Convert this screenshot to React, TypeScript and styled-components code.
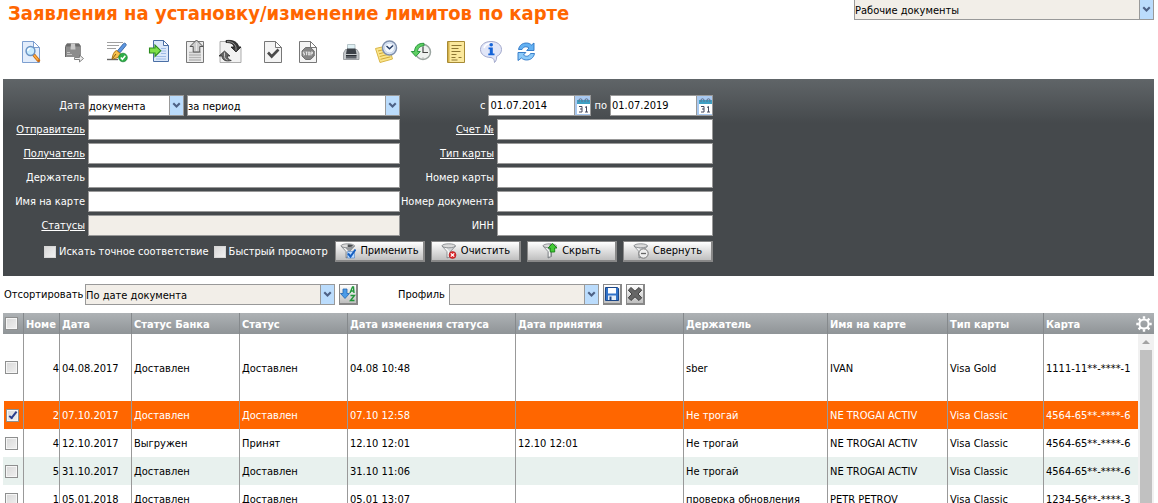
import React from "react";
import styled, { createGlobalStyle, css } from "styled-components";

const GlobalStyle = createGlobalStyle`
  *, *::before, *::after { box-sizing: border-box; }
  html, body { margin: 0; height: 100%; overflow: hidden; background: #fff; }
  body, input, select, button {
    font-family: Tahoma, "DejaVu Sans Condensed", "DejaVu Sans", sans-serif;
    font-size: 11px;
    line-height: 14px;
    color: #000;
  }
`;

const Page = styled.div`
  display: flex;
  flex-direction: column;
  height: 100vh;
  padding: 0 4px 0 3px;
  overflow: hidden;
`;

const TopBar = styled.header`
  display: flex;
  justify-content: space-between;
  align-items: flex-start;
  padding-left: 5px;
`;

const Title = styled.h1`
  margin: 0;
  font-size: 20px;
  line-height: 26px;
  font-weight: bold;
  color: #ff6600;
  white-space: nowrap;
`;

const SelectFrame = styled.span<{ $width?: number; $tone?: "plain" | "muted"; $flushTop?: boolean }>`
  display: flex;
  flex: ${(p) => (p.$width ? `0 0 ${p.$width}px` : "1")};
  height: ${(p) => (p.$flushTop ? 20 : 21)}px;
  border: 1px solid #999;
  ${(p) => p.$flushTop && "border-top: 0;"}
  background: ${(p) => (p.$tone === "muted" ? "#f2eee8" : "#fff")};
`;

const NativeSelect = styled.select`
  appearance: none;
  flex: 1;
  min-width: 0;
  padding: 2px 0 0;
  border: 0;
  border-radius: 0;
  background: transparent;
  outline: none;
`;

const SelectArrow = styled.span`
  display: flex;
  align-items: center;
  justify-content: center;
  width: 14px;
  border-left: 1px solid #999;
  background: #bbdcfc;
  pointer-events: none;
`;

const Toolbar = styled.nav`
  display: flex;
  gap: 19px;
  padding: 13px 0 16px 16px;
`;

const ToolGroup = styled.div`
  display: flex;
  gap: 11px;
`;

const ToolButton = styled.button`
  width: 24px;
  height: 24px;
  padding: 0;
  border: 0;
  background: none;
  svg { display: block; }
`;

const FilterPanel = styled.form`
  padding: 16px 0 14px;
  background: linear-gradient(#606568 0, #45494c 44px);
  color: #fff;
`;

const FilterGrid = styled.div`
  display: grid;
  grid-template-columns: 82px 312px 91px 216px;
  column-gap: 3px;
  row-gap: 3px;
`;

const FieldLabel = styled.label`
  align-self: center;
  justify-self: end;
  color: #fff;
  white-space: nowrap;
  a { color: inherit; }
`;

const TextInput = styled.input<{ $muted?: boolean }>`
  width: 100%;
  height: 21px;
  padding: 0 1px;
  border: 1px solid #999;
  border-radius: 0;
  background: ${(p) => (p.$muted ? "#f2eee8" : "#fff")};
  outline: none;
`;

const Pair = styled.div`
  display: flex;
  gap: 3px;
`;

const DateRange = styled.div`
  grid-column: 3 / 5;
  display: flex;
  justify-content: flex-end;
  align-items: center;
  gap: 3px;
`;

const DateFrame = styled.span`
  display: flex;
  width: 103px;
  height: 21px;
  border: 1px solid #999;
  background: #fff;
  input { flex: 1; min-width: 0; border: 0; padding: 1px 0 0 1px; background: none; outline: none; }
  button { width: 16px; padding: 0; border: 0; border-left: 1px solid #999; background: #a9c9f0; }
  svg { display: block; }
`;

const FilterActions = styled.div`
  display: flex;
  align-items: center;
  gap: 5px;
  width: 710px;
  margin-top: 5px;
  padding-left: 41px;
`;

const ButtonRow = styled.div`
  display: flex;
  gap: 6px;
  margin-left: auto;
`;

const CheckLabel = styled.label`
  display: flex;
  align-items: center;
  gap: 3px;
  white-space: nowrap;
`;

const Checkbox = styled.input<{ $boxed?: boolean }>`
  appearance: none;
  flex: none;
  display: grid;
  width: 12px;
  height: 12px;
  margin: 0;
  border: 1px solid #d6d6d6;
  background: linear-gradient(135deg, #d8d8d8, #f0f0f0);
  ${(p) =>
    p.$boxed &&
    css`
      width: 13px;
      height: 13px;
      border-color: #8e8f8f;
      box-shadow: inset 0 0 0 1px #f6f6f6;
    `}
  &:checked::after {
    content: "";
    width: 4px;
    height: 9px;
    margin: 0 0 0 4px;
    border: solid #2b3e8c;
    border-width: 0 2px 2px 0;
    transform: rotate(38deg);
  }
`;

const bevel = css`
  height: 21px;
  padding: 0;
  border: 1px solid #888;
  border-right-width: 2px;
  border-bottom-width: 2px;
  border-radius: 0;
  background: linear-gradient(#fff, #bfbfbf);
`;

const ActionButton = styled.button`
  ${bevel}
  display: flex;
  align-items: center;
  justify-content: center;
  gap: 4px;
  width: 90px;
`;

const SquareButton = styled.button`
  ${bevel}
  display: grid;
  place-items: center;
  width: 19px;
  margin-left: 4px;
`;

const SortBar = styled.div`
  display: flex;
  align-items: center;
  padding: 8px 0 8px 1px;
`;

const SortLabel = styled.label`
  width: 81px;
`;

const ProfileLabel = styled.label`
  width: 51px;
  margin-left: 40px;
`;

const GridFrame = styled.section`
  display: flex;
  flex: 1;
  min-height: 0;
  overflow: hidden;
`;

const headerFill = css`
  background: linear-gradient(#aeb2b5, #8f9497);
`;

const Table = styled.table`
  flex: 1;
  width: 0;
  align-self: flex-start;
  table-layout: fixed;
  border-collapse: separate;
  border-spacing: 0;
`;

const Th = styled.th`
  height: 21px;
  padding: 2px 1px 0 2px;
  border-right: 1px solid #85898c;
  ${headerFill}
  color: #fff;
  font-weight: bold;
  text-align: left;
  white-space: nowrap;
  overflow: hidden;
  &:first-child { padding-top: 0; }
  &:last-child { border-right: 0; }
`;

const Tr = styled.tr<{ $tall?: boolean; $selected?: boolean; $striped?: boolean }>`
  height: ${(p) => (p.$tall ? 67 : 28)}px;
  color: ${(p) => (p.$selected ? "#fff" : "#000")};
  background: ${(p) => (p.$selected ? "#ff6600" : p.$striped ? "#e8f1ee" : "#fff")};
  td:first-child { border-left: ${(p) => (p.$selected ? 1 : 0)}px solid #fff; }
`;

const Td = styled.td<{ $numeric?: boolean }>`
  padding: ${(p) => (p.$numeric ? "2px 0 0" : "2px 0 0 2px")};
  border-right: 1px solid #999;
  text-align: ${(p) => (p.$numeric ? "right" : "left")};
  white-space: nowrap;
  overflow: hidden;
  &:first-child { padding-top: 0; }
  &:last-child { border-right: 0; }
`;

const SideRail = styled.div`
  display: flex;
  flex-direction: column;
  width: 16px;
`;

const RailHead = styled.div`
  height: 21px;
  ${headerFill}
`;

const GearButton = styled.button`
  display: grid;
  place-items: center;
  width: 16px;
  height: 21px;
  margin-left: -2px;
  padding: 0;
  border: 0;
  background: none;
`;

const ScrollTrack = styled.div`
  flex: 1;
  display: flex;
  flex-direction: column;
  align-items: center;
  background: #f1f1f1;
`;

const ScrollUp = styled.span`
  display: grid;
  place-items: center;
  height: 16px;
`;

const ScrollThumb = styled.span`
  flex: 1;
  width: 12px;
  background: #c1c1c1;
`;

const Chevron = () => (
  <svg width="9" height="7" viewBox="0 0 9 7" aria-hidden="true">
    <path d="M0.500 2 2 .5l2.500 2.500L7 .5l1.500 1.500-4 4z" fill="#4d6185" />
  </svg>
);

const PageShape = ({ stroke = "#777", fill = "#f4f4f4" }: { stroke?: string; fill?: string }) => (
  <>
    <path d="M3.500 2.500h11l6 6v15h-17z" fill={fill} stroke={stroke} />
    <path d="M14.500 2.500v6h6z" fill="#fff" stroke={stroke} />
  </>
);

const toolIcons: Record<string, React.ReactNode> = {
  view: (
    <>
      <PageShape stroke="#7d9fd0" fill="#e3edfb" />
      <path d="m14.500 15.500 5 6" stroke="#c96a12" strokeWidth="3.400" strokeLinecap="round" />
      <path d="m15 16 4 5" stroke="#ffae42" strokeWidth="1.600" />
      <circle cx="11.500" cy="12" r="4.400" fill="#c9ecff" stroke="#6b93c4" strokeWidth="1.500" />
      <path d="M8.800 12a2.800 2.800 0 0 1 2.600-2.600" stroke="#fff" strokeWidth="1.300" fill="none" />
    </>
  ),
  package: (
    <>
      <path d="M5 4.500h12l2 3v10.500H3V7.500z" fill="#8d8d8d" />
      <path d="M5 4.500h12l2 3H3z" fill="#6a6a6a" />
      <path d="M9 4.500h4l.5 6h-5z" fill="#c9c9c9" />
      <path d="M3.500 8v10" stroke="#666" />
      <path d="M5 15.500h5M5 13.500h3" stroke="#c4c4c4" />
      <path d="M12.500 18.500h5v-2.500l4 3.500-4 3.500v-2.500h-5z" fill="#eee" stroke="#777" strokeWidth=".9" />
    </>
  ),
  sign: (
    <>
      <path d="M2 3.500h16M2 6.500h12M2 9.500h9" stroke="#a0a0a0" />
      <path d="M2 20.500h11" stroke="#666" strokeWidth="1.400" />
      <path d="M20.500 4.500c.9.700.9 1.500.3 2.300L15 13.800 12.500 11.800l5.800-7c.7-.7 1.500-.9 2.200-.3z" fill="#5c96e0" stroke="#2a5796" strokeWidth=".8" />
      <path d="m11.500 11.500 4 3.200c-.5 3-3.500 4.800-8.500 5.300.7-4.500 2-7.500 4.500-8.500z" fill="#f7c14c" stroke="#a87010" strokeWidth=".9" />
      <path d="m7.500 19.500 3.500-4.500" stroke="#7a4e08" strokeWidth=".9" />
      <circle cx="18" cy="18.500" r="4.300" fill="#2eae46" stroke="#168030" strokeWidth=".7" />
      <path d="m15.800 18.500 1.600 1.800 2.900-3.500" stroke="#fff" strokeWidth="1.500" fill="none" />
    </>
  ),
  import: (
    <>
      <path d="M5.500 1.500h10l5 5v16h-15z" fill="#dbe8fa" stroke="#4a6fa5" />
      <path d="M15.500 1.500v5h5z" fill="#fff" stroke="#4a6fa5" />
      <path d="M13 9.500h5M13 12h5M13 14.500h5M8 17.500h10M8 20h10" stroke="#9dbbe6" strokeWidth="1.200" />
      <path d="M1.500 9h5.500V6l5.800 5.700L7 17.500v-3.500H1.500z" fill="#7fe049" stroke="#2c8b1e" strokeWidth="1.100" />
    </>
  ),
  exportDoc: (
    <>
      <path d="M3.500 2.500h17v21h-17z" fill="#ececec" stroke="#777" />
      <path d="M6 13.500h12M6 16h12M6 18.500h12M6 21h12" stroke="#b4b4b4" strokeWidth="1.300" />
      <path d="M13.500 1 20 7.500h-3.200V13h-6.600V7.500H7z" fill="#cdcdcd" stroke="#555" />
      <path d="M13.500 4v8" stroke="#eee" strokeWidth=".8" />
    </>
  ),
  exchange: (
    <>
      <path d="M2 2.500h13l8 6v15H2z" fill="#f2f2f2" stroke="#999" strokeWidth=".8" />
      <path d="M8 1.500c7-.8 12 1.500 12.500 6.500h2.500l-5 5-5-5h3C15.500 5 13 3.500 8 3.500z" fill="#3a3a3a" stroke="#111" strokeWidth=".7" />
      <path d="M9 2.500c5 0 8 2 9 6v3" stroke="#aaa" fill="none" strokeWidth=".8" />
      <path d="M6.500 12 12 17H9.300c.2 2 1.200 3.700 4 4.500-5.500 1.500-9.300-.5-9.300-4.500H1z" fill="#666" stroke="#222" strokeWidth=".7" />
      <path d="M6.500 13.500v4c.3 2 1.200 3 3 3.500" stroke="#ccc" fill="none" />
    </>
  ),
  accept: (
    <>
      <PageShape />
      <path d="m7 13.500 3.700 4 6.800-7" stroke="#4b4b4b" strokeWidth="2.600" fill="none" />
    </>
  ),
  stop: (
    <>
      <PageShape />
      <path d="M9.500 8.500h5l3.700 3.500v5l-3.700 3.500h-5L6 17v-5z" fill="#858585" stroke="#707070" />
      <path d="M8.500 13H7.300v1.500h1.200V16H7.200M9.500 13h2M10.500 13v3.200M12.300 13h1.400v3h-1.400zM15 16.500V13h1.500v1.700H15" stroke="#f4f4f4" strokeWidth=".8" fill="none" />
    </>
  ),
  print: (
    <>
      <path d="M8.500 5.500H16v6H8.500z" fill="#dff0f4" stroke="#a8b8bc" strokeWidth=".8" />
      <path d="M6.500 10.500h11.500l2 3.500v6.500H4.500V14z" fill="#c3c7ca" stroke="#8b8f93" strokeWidth=".8" />
      <path d="M8 9.500h8.500l1 5.500H7z" fill="#3c4148" />
      <path d="M7 16.500h10.500v3H7z" fill="#5a5f66" />
      <path d="M7 16.500h10.500" stroke="#2a2e34" />
    </>
  ),
  schedule: (
    <>
      <path d="m1.500 9.500 13-3 4 13.500-12.500 3.500z" fill="#fbe58a" stroke="#d9b648" />
      <path d="m4 12 8-2M5 14.800l10-2.500M5.700 17.500l10-2.500M6.500 20.300l10-2.500" stroke="#cfa936" />
      <circle cx="15.500" cy="9" r="7" fill="#dfe9f8" stroke="#7f90ad" strokeWidth="1.500" />
      <circle cx="15.500" cy="9" r="5" fill="#f4f9ff" stroke="#b7c7de" strokeWidth=".7" />
      <path d="m12.500 7 3 2.800L19 6.500" stroke="#263d66" strokeWidth="1.400" fill="none" />
    </>
  ),
  history: (
    <>
      <circle cx="14" cy="13" r="7.500" fill="#eef1f0" stroke="#9ba5a1" strokeWidth="1.500" />
      <path d="M14 7.500V13.500h5" stroke="#444" strokeWidth="1.200" fill="none" />
      <path d="M14 18.500v1" stroke="#888" />
      <path d="M15 4.300C9 4 5.700 7.500 5.500 12.500H2.300l4.500 5 4.500-5H8.500c.2-3.200 2.200-5.500 6.500-5.700z" fill="#5ecf63" stroke="#1f8e35" strokeWidth=".9" />
    </>
  ),
  log: (
    <>
      <path d="M3.500 2.500h17v21h-17z" fill="#fbe89c" stroke="#a68a35" />
      <path d="M4 3h1.500v20H4z" fill="#d6b24a" />
      <path d="M7.500 6.500h10M7.500 9.500h7M7.500 12.500h9M7.500 15.500h5M7.500 18.500h4M7.500 21h6M14.500 18.500h3" stroke="#8d7632" />
    </>
  ),
  info: (
    <>
      <path d="M12 2.500c6 0 10.500 3.300 10.500 8 0 3.500-2.200 5.800-5 7 .3 2.200 0 4-2 6-.2-2.700-.8-4.300-3.500-5C6 18.500 1.500 15.300 1.500 10.500s4.500-8 10.500-8z" fill="#e1e6f8" stroke="#a3a9cc" />
      <path d="M5 9c.8-3 4-4.800 8-4.800" stroke="#fff" strokeWidth="1.500" fill="none" />
      <circle cx="12.200" cy="5.800" r="1.800" fill="#1463d8" />
      <path d="M9.500 8.500h4.300v6h1.700v1.700H9.300v-1.700h1.500v-4.300H9.500z" fill="#1463d8" />
    </>
  ),
  refresh: (
    <>
      <path d="M4.500 10.500C5.500 6 8.500 4 12.500 4c2 0 3.800.8 5 2l2.500-2v7.500h-7.300l2.300-2.500c-2.700-2-5.500-1.500-7 1.500z" fill="#63b1f2" stroke="#2b74c4" strokeWidth=".9" />
      <path d="M20.500 14.500c-1 4.500-4 6.500-8 6.500-2 0-3.800-.8-5-2L4 21.500V13.500h7.800L9.500 16c2.700 2 5.500 1.500 7-1.500z" fill="#8ccaf9" stroke="#2b74c4" strokeWidth=".9" />
    </>
  ),
};

const toolGroups: { id: string; label: string }[][] = [
  [{ id: "view", label: "Просмотр" }],
  [{ id: "package", label: "Пакет" }],
  [{ id: "sign", label: "Подписать" }],
  [
    { id: "import", label: "Импорт" },
    { id: "exportDoc", label: "Экспорт" },
    { id: "exchange", label: "Обмен" },
  ],
  [
    { id: "accept", label: "Принять" },
    { id: "stop", label: "Отказать" },
  ],
  [
    { id: "print", label: "Печать" },
    { id: "schedule", label: "Расписание" },
    { id: "history", label: "История" },
    { id: "log", label: "Журнал" },
    { id: "info", label: "Информация" },
    { id: "refresh", label: "Обновить" },
  ],
];

const CalendarIcon = () => (
  <svg width="15" height="19" viewBox="0 0 15 19" aria-hidden="true">
    <path d="M2 5h13v13H2z" fill="#fff" />
    <path d="M2 4h13v4H2z" fill="#3fa0c4" />
    <path d="M4 6V3.500q1.500-1.500 3 0V6M10 6V3.500q1.500-1.500 3 0V6" stroke="#60718c" fill="none" />
    <path d="M4 10.500h3v5.500H4M5 13h2M10 11.500l1.500-1V16M10 16h3" stroke="#45495f" fill="none" />
  </svg>
);

const Funnel = ({ children, light }: { children?: React.ReactNode; light?: boolean }) => (
  <svg width="16" height="16" viewBox="0 0 16 16" aria-hidden="true">
    <path d="M1 3 6 8.500V15l3.500-1.500v-5L14.500 3z" fill={light ? "#d4d6d8" : "#9b9fa3"} stroke="#70757a" strokeWidth=".7" />
    <path d="m3.500 4 4 4.500v5" stroke="#f5f5f5" strokeWidth="1.500" fill="none" />
    <ellipse cx="7.700" cy="2.800" rx="6.700" ry="2" fill="#dcdcdc" stroke="#7c8084" strokeWidth=".8" />
    {!light && <path d="M7.700 1.500c3 0 5 .5 5.500 1.300-.5.800-2.500 1.300-5.500 1.300z" fill="#4a4e52" />}
    {children}
  </svg>
);

const ApplyIcon = () => (
  <Funnel>
    <path d="M7.500 8.500h7v6.500h-7z" fill="#bddcff" stroke="#4d83c7" strokeWidth=".6" />
    <path d="m8 10.500 2.500 3 5-7" stroke="#155fc0" strokeWidth="2" fill="none" />
  </Funnel>
);
const ClearIcon = () => (
  <Funnel light>
    <circle cx="11.500" cy="12" r="3.500" fill="#df2b2f" stroke="#a51418" strokeWidth=".6" />
    <path d="m9.800 10.300 3.400 3.400m0-3.400-3.400 3.400" stroke="#fff" strokeWidth="1.200" />
  </Funnel>
);
const HideIcon = () => (
  <Funnel>
    <path d="m10.500.500 4.500 4.500h-2.300v4H8.300V5H6z" fill="#45c936" stroke="#158515" strokeWidth=".9" />
  </Funnel>
);
const CollapseIcon = () => (
  <Funnel light>
    <circle cx="10.500" cy="10.500" r="4.700" fill="#eee" stroke="#777" />
    <path d="M8 10.500h5" stroke="#666" strokeWidth="1.300" />
  </Funnel>
);

const SortIcon = () => (
  <svg width="16" height="16" viewBox="0 0 16 16" aria-hidden="true">
    <path d="M3 3h4v4.500h2.500L5 12.500.500 7.500H3z" fill="#4a9be8" stroke="#2464ae" strokeWidth=".8" />
    <path d="m10 7 2.500-6h1l.5 6M11 5h2.500M10.500 9.500h4l-4 5h4" stroke="#22963a" strokeWidth="1.400" fill="none" />
  </svg>
);
const SaveIcon = () => (
  <svg width="16" height="16" viewBox="0 0 16 16" aria-hidden="true">
    <path d="M1.500 1.500h12l1 1v12h-13z" fill="#3273c8" stroke="#1b4788" />
    <path d="M4 2h8v5.500H4z" fill="#fff" />
    <path d="M4 9.500h8V14H4z" fill="#e4edf7" />
    <path d="M5.500 10.500h2V14h-2z" fill="#1b4788" />
  </svg>
);
const DeleteIcon = () => (
  <svg width="16" height="16" viewBox="0 0 16 16" aria-hidden="true">
    <path d="m4 1.500 4 3.700 4-3.700 2.700 2.700L11 8l3.700 3.800L12 14.500l-4-3.700-4 3.700-2.700-2.700L5 8 1.300 4.200z" fill="#666" stroke="#3f3f3f" />
  </svg>
);
const GearIcon = () => (
  <svg width="16" height="16" viewBox="0 0 16 16" fill="none" stroke="#fff" aria-hidden="true">
    <circle cx="8" cy="8" r="4.600" strokeWidth="2" />
    <path d="M8 .3v2.500M8 13.200v2.500M.3 8h2.500M13.200 8h2.500M2.600 2.600l1.700 1.700M11.700 11.700l1.700 1.700M2.600 13.400l1.700-1.700M11.700 4.300l1.700-1.700" strokeWidth="2.400" />
  </svg>
);

type SelectProps = {
  id?: string;
  label?: string;
  value: string;
  width?: number;
  tone?: "plain" | "muted";
  flushTop?: boolean;
};

const Select = ({ id, label, value, width, tone, flushTop }: SelectProps) => (
  <SelectFrame $width={width} $tone={tone} $flushTop={flushTop}>
    <NativeSelect id={id} aria-label={label} defaultValue={value}>
      <option value={value}>{value}</option>
    </NativeSelect>
    <SelectArrow>
      <Chevron />
    </SelectArrow>
  </SelectFrame>
);

type FieldProps = { id: string; label: string; link?: boolean; muted?: boolean };

const Field = ({ id, label, link, muted }: FieldProps) => (
  <>
    <FieldLabel htmlFor={id}>{link ? <a href={`#${id}`}>{label}</a> : label}</FieldLabel>
    <TextInput id={id} $muted={muted} readOnly={muted} />
  </>
);

const DateField = ({ id, label, value }: { id: string; label: string; value: string }) => (
  <>
    <label htmlFor={id}>{label}</label>
    <DateFrame>
      <input id={id} defaultValue={value} />
      <button type="button" aria-label="Календарь">
        <CalendarIcon />
      </button>
    </DateFrame>
  </>
);

const fields: FieldProps[] = [
  { id: "sender", label: "Отправитель", link: true },
  { id: "account", label: "Счет №", link: true },
  { id: "receiver", label: "Получатель", link: true },
  { id: "card-type", label: "Тип карты", link: true },
  { id: "holder", label: "Держатель" },
  { id: "card-number", label: "Номер карты" },
  { id: "card-name", label: "Имя на карте" },
  { id: "doc-number", label: "Номер документа" },
  { id: "statuses", label: "Статусы", link: true, muted: true },
  { id: "inn", label: "ИНН" },
];

const columns: { title: string; width?: number }[] = [
  { title: "Номе", width: 36 },
  { title: "Дата", width: 72 },
  { title: "Статус Банка", width: 108 },
  { title: "Статус", width: 108 },
  { title: "Дата изменения статуса", width: 168 },
  { title: "Дата принятия", width: 168 },
  { title: "Держатель", width: 144 },
  { title: "Имя на карте", width: 120 },
  { title: "Тип карты", width: 96 },
  { title: "Карта" },
];

const rows: string[][] = [
  ["4", "04.08.2017", "Доставлен", "Доставлен", "04.08 10:48", "", "sber", "IVAN", "Visa Gold", "1111-11**-****-1"],
  ["2", "07.10.2017", "Доставлен", "Доставлен", "07.10 12:58", "", "Не трогай", "NE TROGAI ACTIV", "Visa Classic", "4564-65**-****-6"],
  ["4", "12.10.2017", "Выгружен", "Принят", "12.10 12:01", "12.10 12:01", "Не трогай", "NE TROGAI ACTIV", "Visa Classic", "4564-65**-****-6"],
  ["5", "31.10.2017", "Доставлен", "Доставлен", "31.10 11:06", "", "Не трогай", "NE TROGAI ACTIV", "Visa Classic", "4564-65**-****-6"],
  ["1", "05.01.2018", "Доставлен", "Доставлен", "05.01 13:07", "", "проверка обновления", "PETR PETROV", "Visa Classic", "1234-56**-****-3"],
];

export default function App() {
  return (
    <Page>
      <GlobalStyle />
      <TopBar>
        <Title>Заявления на установку/изменение лимитов по карте</Title>
        <Select label="Раздел" value="Рабочие документы" width={300} tone="muted" flushTop />
      </TopBar>

      <Toolbar>
        {toolGroups.map((group) => (
          <ToolGroup key={group[0].id}>
            {group.map((tool) => (
              <ToolButton key={tool.id} type="button" aria-label={tool.label}>
                <svg width="24" height="24" viewBox="0 0 24 24" fill="none" aria-hidden="true">
                  {toolIcons[tool.id]}
                </svg>
              </ToolButton>
            ))}
          </ToolGroup>
        ))}
      </Toolbar>

      <FilterPanel onSubmit={(e) => e.preventDefault()}>
        <FilterGrid>
          <FieldLabel htmlFor="date-kind">Дата</FieldLabel>
          <Pair>
            <Select id="date-kind" value="документа" width={96} />
            <Select label="Период" value="за период" />
          </Pair>
          <DateRange>
            <DateField id="date-from" label="с" value="01.07.2014" />
            <DateField id="date-to" label="по" value="01.07.2019" />
          </DateRange>
          {fields.map((f) => (
            <Field key={f.id} {...f} />
          ))}
        </FilterGrid>
        <FilterActions>
          <CheckLabel>
            <Checkbox type="checkbox" />
            Искать точное соответствие
          </CheckLabel>
          <CheckLabel>
            <Checkbox type="checkbox" />
            Быстрый просмотр
          </CheckLabel>
          <ButtonRow>
            <ActionButton type="submit"><ApplyIcon />Применить</ActionButton>
            <ActionButton type="button"><ClearIcon />Очистить</ActionButton>
            <ActionButton type="button"><HideIcon />Скрыть</ActionButton>
            <ActionButton type="button"><CollapseIcon />Свернуть</ActionButton>
          </ButtonRow>
        </FilterActions>
      </FilterPanel>

      <SortBar>
        <SortLabel htmlFor="sort">Отсортировать</SortLabel>
        <Select id="sort" value="По дате документа" width={250} tone="muted" />
        <SquareButton type="button" aria-label="Порядок сортировки"><SortIcon /></SquareButton>
        <ProfileLabel htmlFor="profile">Профиль</ProfileLabel>
        <Select id="profile" value="" width={150} tone="muted" />
        <SquareButton type="button" aria-label="Сохранить"><SaveIcon /></SquareButton>
        <SquareButton type="button" aria-label="Удалить"><DeleteIcon /></SquareButton>
      </SortBar>

      <GridFrame>
        <Table>
          <colgroup>
            <col width={21} />
            {columns.map((c) => (
              <col key={c.title} width={c.width} />
            ))}
          </colgroup>
          <thead>
            <tr>
              <Th><Checkbox type="checkbox" $boxed aria-label="Выбрать все" /></Th>
              {columns.map((c) => (
                <Th key={c.title} scope="col">{c.title}</Th>
              ))}
            </tr>
          </thead>
          <tbody>
            {rows.map((row, r) => (
              <Tr key={row[1]} $tall={r === 0} $selected={r === 1} $striped={r === 3}>
                <Td>
                  <Checkbox type="checkbox" $boxed defaultChecked={r === 1} aria-label={`Выбрать ${row[1]}`} />
                </Td>
                {row.map((cell, c) => (
                  <Td key={columns[c].title} $numeric={c === 0}>{cell}</Td>
                ))}
              </Tr>
            ))}
          </tbody>
        </Table>
        <SideRail>
          <RailHead>
            <GearButton type="button" aria-label="Настройки"><GearIcon /></GearButton>
          </RailHead>
          <ScrollTrack>
            <ScrollUp>
              <svg width="8" height="4" viewBox="0 0 8 4" aria-hidden="true">
                <path d="m4 0 4 4H0z" fill="#a3a3a3" />
              </svg>
            </ScrollUp>
            <ScrollThumb />
          </ScrollTrack>
        </SideRail>
      </GridFrame>
    </Page>
  );
}
